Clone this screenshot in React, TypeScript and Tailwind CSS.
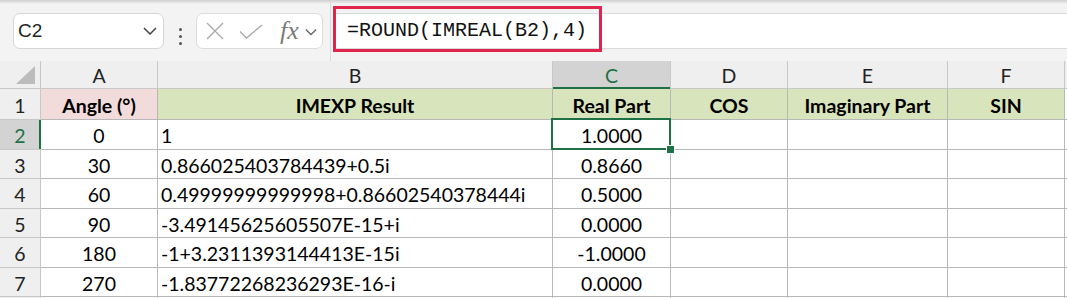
import type { FC, ReactNode } from "react";

const columns = ["A", "B", "C", "D", "E", "F"];

const rows: string[][] = [
  ["0", "1", "1.0000"],
  ["30", "0.866025403784439+0.5i", "0.8660"],
  ["60", "0.49999999999998+0.86602540378444i", "0.5000"],
  ["90", "-3.49145625605507E-15+i", "0.0000"],
  ["180", "-1+3.2311393144413E-15i", "-1.0000"],
  ["270", "-1.83772268236293E-16-i", "0.0000"],
];

const Chevron: FC<{ className?: string }> = ({ className }) => (
  <svg width="14" height="8" viewBox="0 0 14 8" className={className}>
    <polyline points="1,1 7,7 13,1" fill="none" stroke="currentColor" strokeWidth="1.5" />
  </svg>
);

const Toolbar: FC = () => (
  <div className="flex flex-col bg-[#f3f3f3]">
    <div className="h-[4px] bg-gradient-to-b from-[#cfcfcf] to-[#f3f3f3]" />
    <div className="flex h-[57px]">
      {/* name box */}
      <div className="ml-[13px] mt-[9px] flex h-[36px] w-[151px] items-center justify-between rounded-[7px] border border-[#d6d6d6] bg-white pl-[4px] pr-[6px]">
        <span className="font-['Liberation_Sans',sans-serif] text-[19px] text-[#1f1f1f]">C2</span>
        <Chevron className="text-[#444]" />
      </div>
      <div className="flex w-[32px] flex-col items-center justify-center gap-[4px] pt-[7px]">
        <span className="h-[3px] w-[3px] rounded-full bg-[#555]" />
        <span className="h-[3px] w-[3px] rounded-full bg-[#555]" />
        <span className="h-[3px] w-[3px] rounded-full bg-[#555]" />
      </div>
      {/* cancel / enter / fx */}
      <div className="mt-[9px] flex h-[36px] w-[127px] items-center rounded-[7px] border border-[#dcdcdc] bg-white pl-[9px]">
        <svg width="18" height="18" viewBox="0 0 18 18">
          <path d="M1 1 L17 17 M17 1 L1 17" stroke="#a8a8a8" strokeWidth="1.3" fill="none" />
        </svg>
        <svg width="24" height="15" viewBox="0 0 24 15" className="ml-[15px]">
          <polyline points="1,7.5 7.5,14 23,1" stroke="#a8a8a8" strokeWidth="1.3" fill="none" />
        </svg>
        <span className="ml-[17px] font-['Liberation_Serif',serif] text-[26px] italic leading-none text-[#7b7b7b]">
          fx
        </span>
        <Chevron className="ml-[6px] mt-[2px] w-[12px] text-[#666]" />
      </div>
      <div className="ml-[7px] -mt-[4px] w-px bg-[#dadada]" />
      {/* formula bar */}
      <div className="relative flex-1">
        <div className="ml-[2px] mt-[9px] flex h-[36px] items-center border-y border-[#dadada] bg-white pl-[14px]">
          <span className="font-['Liberation_Mono',monospace] text-[20px] text-[#111]">
            =ROUND(IMREAL(B2),4)
          </span>
        </div>
        <div className="absolute left-[2px] top-[2px] h-[46px] w-[269px] border-[3px] border-[#e0244c]" />
      </div>
    </div>
  </div>
);

const Corner: FC = () => (
  <div className="relative border-b border-r border-[#c8c8c8] bg-[#efefef]">
    <svg width="40" height="27" viewBox="0 0 40 27" className="absolute left-0 top-0">
      <polygon points="16,23 35,23 35,5" fill="#bcbcbc" />
    </svg>
  </div>
);

const HeaderCell: FC<{ selected?: boolean; children: ReactNode }> = ({ selected, children }) => (
  <div
    className={`relative flex items-center justify-center border-b border-r border-[#c8c8c8] pt-[2px] ${
      selected ? "bg-[#d3d3d3] text-[#1e7145]" : "bg-[#efefef] text-[#222]"
    }`}
  >
    {children}
    {selected && <div className="absolute -bottom-px left-0 right-0 h-[2px] bg-[#1e7145]" />}
  </div>
);

const RowHeader: FC<{ selected?: boolean; children?: ReactNode }> = ({ selected, children }) => (
  <div
    className={`relative flex items-center justify-center border-b border-r border-[#c8c8c8] pt-[3px] ${
      selected ? "bg-[#d3d3d3] text-[#1e7145]" : "bg-[#efefef] text-[#222]"
    }`}
  >
    {children}
    {selected && <div className="absolute -right-px bottom-0 top-0 w-[2px] bg-[#1e7145]" />}
  </div>
);

const Cell: FC<{ className?: string; children?: ReactNode }> = ({ className = "", children }) => (
  <div className={`relative flex items-center whitespace-nowrap border-b border-r border-[#b8b8b8] pt-[3px] text-black ${className}`}>
    {children}
  </div>
);

const Sheet: FC = () => (
  <div className="grid grid-cols-[41px_117px_395px_118px_117px_160px_117px_1fr] grid-rows-[28px_31px_30px_29px_30px_29px_30px_29px_29px] font-['Lato',sans-serif] text-[19.5px]">
    <Corner />
    {columns.map((c) => (
      <HeaderCell key={c} selected={c === "C"}>
        {c}
      </HeaderCell>
    ))}
    <div className="border-b border-[#c8c8c8] bg-[#efefef]" />

    {/* row 1 - titles */}
    <RowHeader>1</RowHeader>
    <Cell className="justify-center bg-[#f2dcdb] font-bold">Angle (°)</Cell>
    <Cell className="justify-center bg-[#d8e4bc] font-bold">IMEXP Result</Cell>
    <Cell className="justify-center bg-[#d8e4bc] font-bold">Real Part</Cell>
    <Cell className="justify-center bg-[#d8e4bc] font-bold">COS</Cell>
    <Cell className="justify-center bg-[#d8e4bc] font-bold">Imaginary Part</Cell>
    <Cell className="justify-center bg-[#d8e4bc] font-bold">SIN</Cell>
    <div className="border-b border-[#b8b8b8] bg-white" />

    {rows.map((r, i) => {
      const n = i + 2;
      return [
        <RowHeader key={`h${n}`} selected={n === 2}>
          {n}
        </RowHeader>,
        <Cell key={`a${n}`} className="justify-center bg-white">
          {r[0]}
        </Cell>,
        <Cell key={`b${n}`} className="bg-white pl-[3px]">
          {r[1]}
        </Cell>,
        <Cell key={`c${n}`} className="justify-center bg-white">
          {r[2]}
          {n === 2 && (
            <>
              <div className="absolute -bottom-px -left-[2px] -right-px -top-[2px] border-2 border-[#1e7145]" />
              <div className="absolute -bottom-[4px] -right-[4px] z-10 h-[7px] w-[7px] bg-[#1e7145] ring-1 ring-white" />
            </>
          )}
        </Cell>,
        <Cell key={`d${n}`} className="bg-white" />,
        <Cell key={`e${n}`} className="bg-white" />,
        <Cell key={`f${n}`} className="bg-white" />,
        <div key={`x${n}`} className="border-b border-[#b8b8b8] bg-white" />,
      ];
    })}
    {/* partial next row */}
    <RowHeader />
    <Cell className="bg-white" />
    <Cell className="bg-white" />
    <Cell className="bg-white" />
    <Cell className="bg-white" />
    <Cell className="bg-white" />
    <Cell className="bg-white" />
    <div className="bg-white" />
  </div>
);

export default function App() {
  return (
    <div className="h-[298px] w-[1067px] overflow-hidden bg-white">
      <Toolbar />
      <Sheet />
    </div>
  );
}
